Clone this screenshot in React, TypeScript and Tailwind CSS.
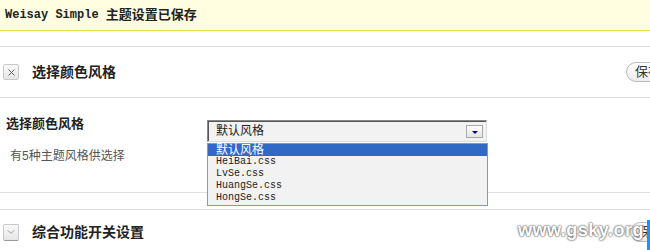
import { X, ChevronDown } from 'lucide-react';

const options = ['默认风格', 'HeiBai.css', 'LvSe.css', 'HuangSe.css', 'HongSe.css'];

export default function App() {
    return (
        <div className="relative h-[250px] w-[650px] overflow-hidden bg-white font-['Liberation_Sans','Noto_Sans_CJK_SC',sans-serif] text-[#333]">
            {/* notice */}
            <div className="flex h-[31px] items-center border-b border-[#e6db55] bg-[#fffee0] px-[5px] text-[12px] font-bold text-[#222]">
                <span className="font-['Liberation_Mono','Noto_Sans_CJK_SC',monospace]">Weisay Simple</span>
                <span className="ml-[7px] text-[13px]">主题设置已保存</span>
            </div>

            <div className="h-[16px] border-b border-[#dfdfdf]" />

            {/* section 1 header */}
            <div className="flex h-[51px] items-center justify-between border-b border-[#dfdfdf] pl-[3px]">
                <div className="flex items-center">
                    <span className="flex h-[16px] w-[16px] items-center justify-center rounded-[2px] border border-[#c8c8c8] bg-gradient-to-b from-[#fafafa] to-[#e6e6e6] text-[#555]">
                        <X size={11} strokeWidth={2} />
                    </span>
                    <h2 className="ml-[13px] text-[14px] font-bold text-[#222]">选择颜色风格</h2>
                </div>
                <button className="mr-[-20px] h-[20px] rounded-full border border-[#bbb] bg-gradient-to-b from-white to-[#ededed] px-[8px] text-[13px] leading-[18px] text-[#333]">
                    保存
                </button>
            </div>

            {/* option row */}
            <div className="flex h-[95px] border-b border-[#dfdfdf]">
                <div className="w-[207px] pl-[6px] pt-[19px]">
                    <div className="text-[13px] font-bold leading-[14px] text-[#222]">选择颜色风格</div>
                    <div className="mt-[18px] pl-[4px] text-[12px] leading-[14px] text-[#555]">有5种主题风格供选择</div>
                </div>
                <div className="relative pt-[22px]">
                    <div className="flex h-[22px] w-[280px] items-center justify-between border border-t-[#888] border-l-[#888] border-r-[#ddd] border-b-[#ddd] bg-[#f2f2f2] pl-[8px] pr-[3px] shadow-[inset_1px_1px_0_#555]">
                        <span className="text-[12px] text-[#222]">默认风格</span>
                        <span className="flex h-[13px] w-[17px] items-center justify-center border border-[#aaa] bg-gradient-to-b from-[#fdfdfd] to-[#e4e4e4]">
                            <span className="mt-[2px] h-0 w-0 border-x-[3px] border-t-[3px] border-x-transparent border-t-[#00008b]" />
                        </span>
                    </div>
                    <div className="absolute left-0 top-[45px] z-10 w-[281px] border border-[#7f9db9] bg-[#f2f2f2] pb-[1px]">
                        {options.map((o, i) => (
                            <div
                                key={o}
                                className={
                                    i === 0
                                        ? 'h-[12px] bg-[#316ac5] pl-[8px] text-[12px] leading-[12px] text-white'
                                        : "h-[12px] pl-[8px] font-['Liberation_Mono',monospace] text-[10px] leading-[12px] text-[#222]"
                                }
                            >
                                {o}
                            </div>
                        ))}
                    </div>
                </div>
            </div>

            <div className="h-[17px] border-b border-[#dfdfdf]" />

            {/* section 2 header */}
            <div className="flex h-[44px] items-center justify-between pl-[3px]">
                <div className="flex items-center">
                    <span className="flex h-[17px] w-[16px] items-center justify-center rounded-[2px] border border-[#c8c8c8] border-b-[#999] bg-gradient-to-b from-[#fafafa] to-[#e6e6e6] text-[#777]">
                        <ChevronDown size={12} strokeWidth={1.5} />
                    </span>
                    <h2 className="ml-[13px] text-[14px] font-bold text-[#222]">综合功能开关设置</h2>
                </div>
                <button className="mr-[-24px] h-[20px] rounded-full border border-[#bbb] bg-gradient-to-b from-white to-[#ededed] px-[8px] text-[13px] leading-[18px] text-[#333]">
                    保存
                </button>
            </div>

            {/* watermark */}
            <div className="absolute bottom-[6px] right-[6px] font-['Liberation_Sans',sans-serif] text-[18px] font-bold tracking-[0.5px] text-white [text-shadow:0_0_2px_#555,0_0_2px_#555]">
                www.gsky.org
            </div>
            <div className="absolute bottom-0 right-0 h-[30px] w-[3px] bg-[#1e90ff]" />
        </div>
    );
}
